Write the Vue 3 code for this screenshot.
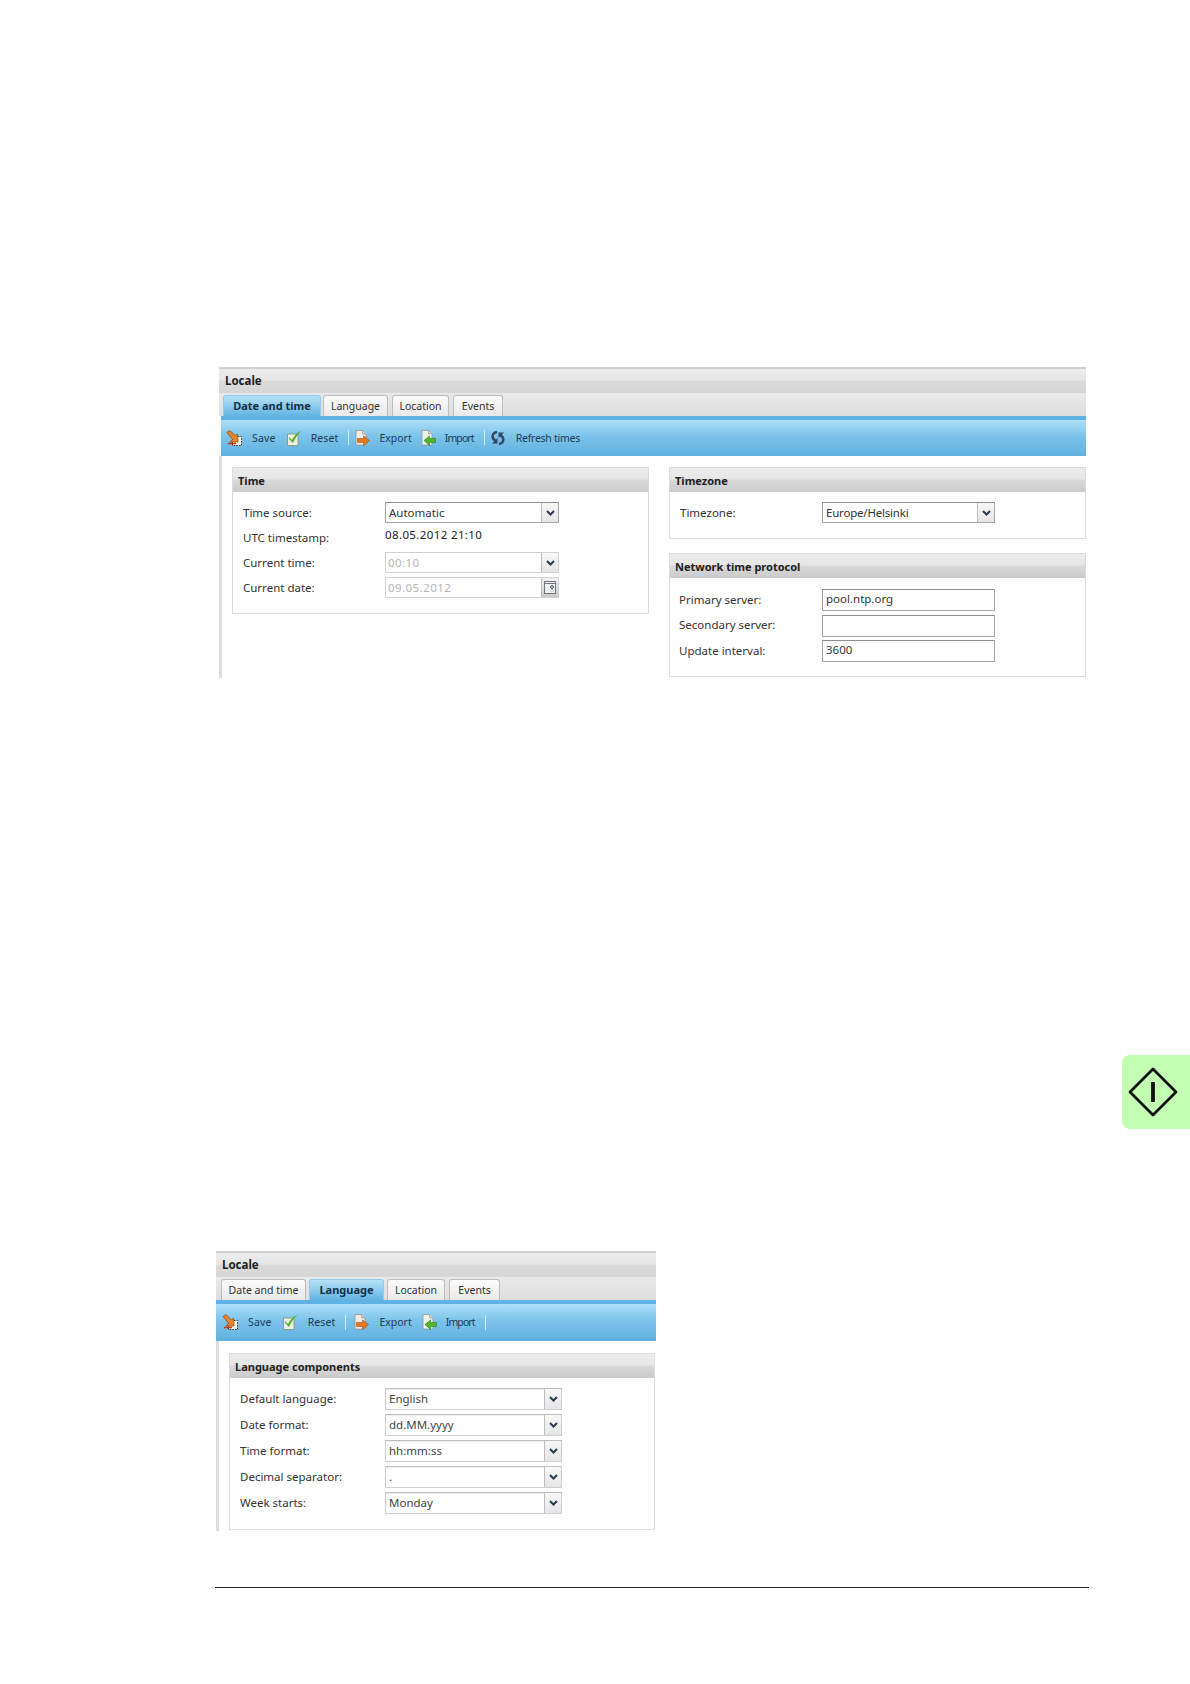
<script setup>
const tabsA = [
  { name: 'Date and time', active: true, width: 98, gap: 0 },
  { name: 'Language', width: 65, gap: 2 },
  { name: 'Location', width: 57, gap: 4 },
  { name: 'Events', width: 50, gap: 4 },
]
const tabsB = [
  { name: 'Date and time', width: 85, gap: 0 },
  { name: 'Language', active: true, width: 75, gap: 3 },
  { name: 'Location', width: 58, gap: 3 },
  { name: 'Events', width: 51, gap: 4 },
]
const toolsA = [
  { icon: 'save', text: 'Save', track: 0.2, shift: 0, inset: 1 },
  { icon: 'reset', text: 'Reset', track: 0.1, shift: 0, inset: 0, sep: true },
  { icon: 'export', text: 'Export', track: 0, shift: -2, inset: 0 },
  { icon: 'import', text: 'Import', track: -0.9, shift: -2, inset: 0, sep: true },
  { icon: 'refresh', text: 'Refresh times', track: -0.25, shift: -2, inset: 1 },
]
const toolsB = [
  { icon: 'save', text: 'Save', track: 0.2, shift: 0, inset: 1 },
  { icon: 'reset', text: 'Reset', track: 0.1, shift: 0, inset: 1, sep: true },
  { icon: 'export', text: 'Export', track: 0, shift: 0, inset: 1 },
  { icon: 'import', text: 'Import', track: -0.9, shift: -1, inset: 0, sep: true },
]
const language = [
  { label: 'Default language:', value: 'English' },
  { label: 'Date format:', value: 'dd.MM.yyyy' },
  { label: 'Time format:', value: 'hh:mm:ss' },
  { label: 'Decimal separator:', value: '.' },
  { label: 'Week starts:', value: 'Monday' },
]
const ntp = [
  { label: 'Primary server:', value: 'pool.ntp.org' },
  { label: 'Secondary server:', value: '' },
  { label: 'Update interval:', value: '3600' },
]
const windows = [
  { id: 'a', tabs: tabsA, tools: toolsA },
  { id: 'b', tabs: tabsB, tools: toolsB },
]
</script>

<template>
  <div class="page">
    <template v-for="win in windows" :key="win.id">
      <section class="window" :class="'window-' + win.id">
        <div class="bar title">Locale</div>
        <div class="tabs">
          <div
            v-for="tab in win.tabs"
            :key="tab.name"
            class="tab"
            :class="{ active: tab.active }"
            :style="{ width: tab.width + 'px', marginLeft: tab.gap + 'px' }"
          >{{ tab.name }}</div>
        </div>
        <div class="toolbar">
          <template v-for="tool in win.tools" :key="tool.text">
            <div class="tool" :style="{ marginLeft: tool.shift + 'px' }">
              <svg class="icon" viewBox="0 0 16 16" width="16" height="16">
                <g v-if="tool.icon === 'save'">
                  <rect x="6.5" y="6.5" width="9" height="9" fill="#f6f3e6" stroke="#333" stroke-width="1" stroke-dasharray="1.5 1.2" />
                  <path d="M1 2.5 L4 0.5 L9.5 6 L11.5 4 L12 12 L4 12 L6.5 9.5 Z" fill="#e9802a" stroke="#8a4a12" stroke-width=".7" />
                  <path d="M2 13.5 H10" stroke="#c43b12" stroke-width="1.6" />
                </g>
                <g v-else-if="tool.icon === 'reset'">
                  <path d="M1.5 4 H12 V15.5 H1.5 Z" fill="#eef0e4" stroke="#7f9a7a" stroke-width=".9" />
                  <path d="M3 7 L6 10 C8 6 11 2.5 16 .5 C12 4 9 8 7 13 L3 9 Z" fill="#55b02c" />
                </g>
                <g v-else-if="tool.icon === 'export'">
                  <path d="M2 .5 H8.5 L12 4 V15 H2 Z" fill="#f2ece4" stroke="#9a8f84" stroke-width=".8" />
                  <path d="M8.5 .5 V4 H12" fill="#d8d2c8" stroke="#9a8f84" stroke-width=".6" />
                  <path d="M3.5 8.5 H9.5 V6 L15.5 10.5 L9.5 15.5 V12.5 H3.5 Z" fill="#e4791f" stroke="#a04f10" stroke-width=".6" />
                </g>
                <g v-else-if="tool.icon === 'import'">
                  <path d="M2 .5 H8.5 L12 4 V15 H2 Z" fill="#eef0ea" stroke="#8e9a94" stroke-width=".8" />
                  <path d="M8.5 .5 V4 H12" fill="#d4dad2" stroke="#8e9a94" stroke-width=".6" />
                  <path d="M15.5 8.5 H9.5 V6 L4 10.5 L9.5 15.5 V12.5 H15.5 Z" fill="#4fb52e" stroke="#2d7d18" stroke-width=".6" />
                </g>
                <g v-else fill="none" stroke="#33475e" stroke-width="2.5">
                  <path d="M7 2 C3 2.5 1.5 6 3.5 9 L5.5 11" />
                  <path d="M9 14 C13 13.5 14.5 10 12.5 7 L10.5 5" />
                  <path d="M7.5 8 V13.5 H2 Z M8.5 8 V2.5 H14 Z" fill="#33475e" stroke="none" />
                </g>
              </svg>
              <span :style="{ letterSpacing: tool.track + 'px', marginLeft: tool.inset + 'px' }">{{ tool.text }}</span>
            </div>
            <i v-if="tool.sep" class="sep"></i>
          </template>
        </div>

        <div v-if="win.id === 'a'" class="body body-a">
          <div class="panel panel-time">
            <div class="bar head">Time</div>
            <div class="rows">
              <div class="row">
                <span class="label">Time source:</span>
                <div class="field"><span class="val">Automatic</span><b class="btn"><svg class="chev" viewBox="0 0 9 6" width="9" height="6"><path d="M1 1 L4.5 4.5 L8 1" /></svg></b></div>
              </div>
              <div class="row">
                <span class="label">UTC timestamp:</span>
                <span class="stamp">08.05.2012 21:10</span>
              </div>
              <div class="row">
                <span class="label">Current time:</span>
                <div class="field off"><span class="val">00:10</span><b class="btn"><svg class="chev" viewBox="0 0 9 6" width="9" height="6"><path d="M1 1 L4.5 4.5 L8 1" /></svg></b></div>
              </div>
              <div class="row">
                <span class="label">Current date:</span>
                <div class="field off"><span class="val">09.05.2012</span><b class="btn date"><svg viewBox="0 0 12 13" width="12" height="13"><rect x=".5" y=".5" width="11" height="12" fill="#eef0f2" stroke="#6f7680" /><path d="M.5 2.5 H11.5" stroke="#6f7680" /><circle cx="8" cy="6" r="1.4" fill="none" stroke="#444" /></svg></b></div>
              </div>
            </div>
          </div>
          <div class="side">
            <div class="panel panel-zone">
              <div class="bar head">Timezone</div>
              <div class="rows">
                <div class="row">
                  <span class="label">Timezone:</span>
                  <div class="field"><span class="val zone">Europe/Helsinki</span><b class="btn"><svg class="chev" viewBox="0 0 9 6" width="9" height="6"><path d="M1 1 L4.5 4.5 L8 1" /></svg></b></div>
                </div>
              </div>
            </div>
            <div class="panel panel-ntp">
              <div class="bar head">Network time protocol</div>
              <div class="rows">
                <div v-for="item in ntp" :key="item.label" class="row">
                  <span class="label">{{ item.label }}</span>
                  <div class="field"><span class="val">{{ item.value }}</span></div>
                </div>
              </div>
            </div>
          </div>
        </div>

        <div v-else class="body body-b">
          <div class="panel panel-lang">
            <div class="bar head">Language components</div>
            <div class="rows">
              <div v-for="item in language" :key="item.label" class="row">
                <span class="label">{{ item.label }}</span>
                <div class="field soft"><span class="val">{{ item.value }}</span><b class="btn"><svg class="chev" viewBox="0 0 9 6" width="9" height="6"><path d="M1 1 L4.5 4.5 L8 1" /></svg></b></div>
              </div>
            </div>
          </div>
        </div>
      </section>

      <aside v-if="win.id === 'a'" class="thumb">
        <svg viewBox="0 0 50 50" width="50" height="50">
          <path d="M25 2 L48 25 L25 48 L2 25 Z" fill="none" stroke="#111" stroke-width="2.8" stroke-linejoin="round" />
          <path d="M25 15 V35" stroke="#111" stroke-width="3.8" />
        </svg>
      </aside>
    </template>
    <hr class="rule" />
  </div>
</template>

<style scoped>
.page {
  height: 1684px;
  padding-top: 367px;
  box-sizing: border-box;
  overflow: hidden;
  background: #fff;
  font-family: "Noto Sans", "Liberation Sans", sans-serif;
  font-size: 12px;
  color: #333;
}
.window { margin-left: 219px; }
.window-a { width: 867px; }
.window-b { width: 440px; margin-left: 216px; margin-top: 122px; }

.bar {
  background: linear-gradient(#ededed, #e6e6e6 45%, #d8d8d8 52%, #cbcbcb);
  font-weight: 700;
  color: #222;
  box-sizing: border-box;
}
.title {
  height: 26px;
  padding: 4px 0 0 6px;
  border-top: 2px solid #d0d0d0;
  font-size: 11.5px;
  line-height: 16px;
  background: linear-gradient(#ececec, #e6e6e6 45%, #dadada 52%, #d6d6d6);
}
.tabs {
  display: flex;
  height: 23px;
  padding: 2px 0 0 4px;
  box-sizing: border-box;
  background: linear-gradient(#e9e9e9, #dedede);
}
.window-b .tabs { padding-left: 5px; }
.tab {
  box-sizing: border-box;
  height: 21px;
  border: 1px solid #bdbdbd;
  border-bottom: none;
  border-radius: 3px 3px 0 0;
  background: linear-gradient(#fbfbfb, #e9e9e9);
  font-size: 10.5px;
  line-height: 21px;
  text-align: center;
  color: #333;
  white-space: nowrap;
}
.tab.active {
  border-color: #8ecbec;
  background: linear-gradient(#b7e2f7, #63b4e3);
  font-weight: 700;
  color: #14304a;
  font-size: 11px;
  line-height: 19px;
}
.toolbar {
  display: flex;
  align-items: center;
  gap: 10px;
  height: 40px;
  margin-left: 2px;
  padding: 0 0 1px 5px;
  box-sizing: border-box;
  border-top: 4px solid #5fb2e3;
  background: linear-gradient(#addff8, #7cc3ea 45%, #5fb1e0);
}
.window-b .toolbar { height: 41px; margin-left: 0; padding-left: 6px; }
.tool {
  display: flex;
  align-items: center;
  gap: 9px;
  font-size: 10.5px;
  color: #1d3b57;
  white-space: nowrap;
}
.icon { flex: none; }
.sep {
  width: 1px;
  height: 15px;
  margin-right: -3px;
  background: #cfeafa;
}

.body { display: flex; box-sizing: border-box; border-left: 3px solid #dedede; }
.body-a { height: 222px; padding: 11px 0 0 10px; }
.body-b { height: 190px; padding: 12px 0 0 10px; }
.side { display: flex; flex-direction: column; gap: 14px; margin-left: 20px; }

.panel {
  width: 417px;
  box-sizing: border-box;
  border: 1px solid #dcdcdc;
  background: #fff;
}
.panel-time { height: 147px; }
.panel-zone { height: 72px; }
.panel-ntp { height: 124px; }
.panel-lang { width: 426px; height: 177px; }
.head {
  height: 24px;
  padding-left: 5px;
  font-size: 11px;
  line-height: 25px;
}
.rows {
  display: flex;
  flex-direction: column;
  gap: 4px;
  padding: 10px 0 0 10px;
}
.row {
  display: grid;
  grid-template-columns: 142px 174px;
  align-items: center;
  height: 21px;
  line-height: 21px;
}
.panel-zone .row, .panel-ntp .row { grid-template-columns: 142px 173px; }
.panel-ntp .rows { gap: 3.5px; padding-top: 11px; }
.panel-ntp .row, .panel-lang .row { height: 22px; }
.panel-ntp .field { height: 22px; line-height: 18px; }
.panel-lang .field { height: 22px; line-height: 20px; }
.panel-ntp .label { margin: -2px 0 0 -1px; }
.panel-lang .label { margin-top: -2px; }
.panel-lang .rows { gap: 4px; }
.panel-lang .row { grid-template-columns: 145px 177px; }
.label { font-size: 11.5px; color: #333; white-space: nowrap; }
.stamp { margin-top: -6px; font-size: 11.5px; letter-spacing: .38px; color: #222; }
.field {
  display: flex;
  box-sizing: border-box;
  height: 21px;
  border: 1px solid #a5a5a5;
  border-top-color: #8f8f8f;
  background: #fff;
  font-size: 11.5px;
  line-height: 19px;
  color: #333;
}
.field.off { border-color: #d2d2d2; color: #b5b5b5; letter-spacing: .45px; }
.field.off .val { padding-left: 2px; }
.field.soft { border-color: #cfcfcf; border-top-color: #bdbdbd; box-shadow: inset 0 1px 1px #eee; color: #444; }
.val { flex: 1; padding-left: 3px; overflow: hidden; white-space: nowrap; }
.val.zone { letter-spacing: -.2px; }
.btn {
  display: flex;
  align-items: center;
  justify-content: center;
  flex: none;
  width: 17px;
  box-sizing: border-box;
  border-left: 1px solid #bdbdbd;
  background: linear-gradient(#f7f7f7, #e6e6e6);
}
.btn.date { background: linear-gradient(#f2f2f2, #c9c9c9); }
.chev { fill: none; stroke: #2a3a55; stroke-width: 2; }

.thumb {
  display: flex;
  align-items: center;
  box-sizing: border-box;
  width: 68px;
  height: 74px;
  margin: 377px 0 0 1122px;
  padding-left: 6px;
  border-radius: 8px 0 0 8px;
  background: #c2ffb3;
}
.rule {
  width: 874px;
  height: 1px;
  margin: 56px 0 0 215px;
  border: 0;
  background: #222;
}
</style>

<style>
html, body { margin: 0; background: #fff; }
</style>
